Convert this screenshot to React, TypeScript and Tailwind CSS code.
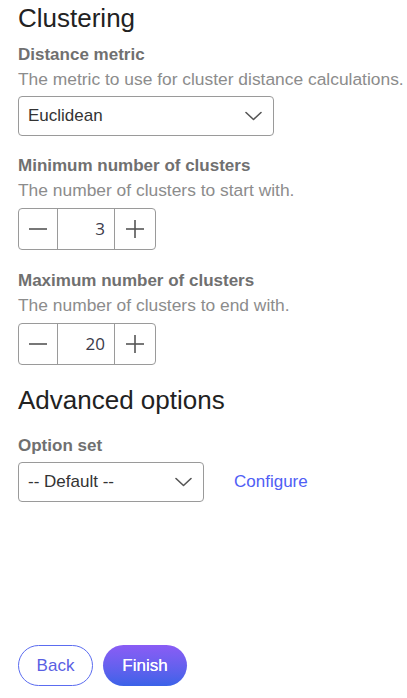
import React from "react";

function Chevron() {
  return (
    <svg width="17" height="10" viewBox="0 0 17 10" fill="none">
      <polyline points="1,1.5 8.5,8.5 16,1.5" stroke="#555" strokeWidth="1.6" strokeLinecap="round" strokeLinejoin="round" />
    </svg>
  );
}

function Select({ value, width }: { value: string; width: string }) {
  return (
    <div className={`flex h-[40px] ${width} items-center justify-between rounded-[4px] border border-[#9a9a9a] bg-white pl-[9px] pr-[11px] text-[17px] text-[#333]`}>
      <span>{value}</span>
      <Chevron />
    </div>
  );
}

function Stepper({ value }: { value: string }) {
  return (
    <div className="flex h-[42px] w-[138px] rounded-[4px] border border-[#9a9a9a] bg-white">
      <div className="flex w-[39px] items-center justify-center border-r border-[#9a9a9a]">
        <svg width="18" height="2" viewBox="0 0 18 2">
          <line x1="0" y1="1" x2="18" y2="1" stroke="#555" strokeWidth="1.6" />
        </svg>
      </div>
      <div className="flex w-[57px] items-center justify-end border-r border-[#9a9a9a] pr-[9px] text-[17px] text-[#3a3a4a]" style={{ fontFamily: '"Open Sans", "Liberation Sans", sans-serif' }}>
        {value}
      </div>
      <div className="flex flex-1 items-center justify-center">
        <svg width="18" height="18" viewBox="0 0 18 18">
          <line x1="0" y1="9" x2="18" y2="9" stroke="#555" strokeWidth="1.6" />
          <line x1="9" y1="0" x2="9" y2="18" stroke="#555" strokeWidth="1.6" />
        </svg>
      </div>
    </div>
  );
}

export default function App() {
  return (
    <div
      className="flex h-[698px] flex-col bg-white pl-[18px]"
      style={{ fontFamily: '"Liberation Sans", Arial, sans-serif' }}
    >
      <h1 className="pt-[2px] text-[26px] leading-[32px] text-[#222]">Clustering</h1>

      <div className="mt-[9px] text-[17px] font-bold leading-[24px] text-[#707070]">Distance metric</div>
      <div className="text-[17.4px] leading-[24px] text-[#8c8c8c]">The metric to use for cluster distance calculations.</div>
      <div className="mt-[5px]">
        <Select value="Euclidean" width="w-[256px]" />
      </div>

      <div className="mt-[18px] text-[17px] font-bold leading-[24px] text-[#707070]">Minimum number of clusters</div>
      <div className="text-[17.4px] leading-[24px] text-[#8c8c8c]">The number of clusters to start with.</div>
      <div className="mt-[6px]">
        <Stepper value="3" />
      </div>

      <div className="mt-[19px] text-[17px] font-bold leading-[24px] text-[#707070]">Maximum number of clusters</div>
      <div className="text-[17.4px] leading-[24px] text-[#8c8c8c]">The number of clusters to end with.</div>
      <div className="mt-[6px]">
        <Stepper value="20" />
      </div>

      <h2 className="mt-[19px] text-[26px] leading-[32px] text-[#222]">Advanced options</h2>

      <div className="mt-[18px] text-[17px] font-bold leading-[24px] text-[#707070]">Option set</div>
      <div className="mt-[4px] flex items-center gap-[30px]">
        <Select value="-- Default --" width="w-[186px]" />
        <span className="text-[17px] text-[#4f5ef5]">Configure</span>
      </div>

      <div className="mt-auto flex gap-[10px] pb-[12px]">
        <button className="flex h-[41px] w-[75px] items-center justify-center rounded-full border border-[#5b6cf0] bg-white text-[17px] text-[#5a5fe3]">
          Back
        </button>
        <button className="flex h-[41px] w-[84px] items-center justify-center rounded-full bg-gradient-to-b from-[#8a5cf5] to-[#3a62e8] text-[17px] font-medium text-white [text-shadow:0_0_0.4px_#fff]">
          Finish
        </button>
      </div>
    </div>
  );
}
